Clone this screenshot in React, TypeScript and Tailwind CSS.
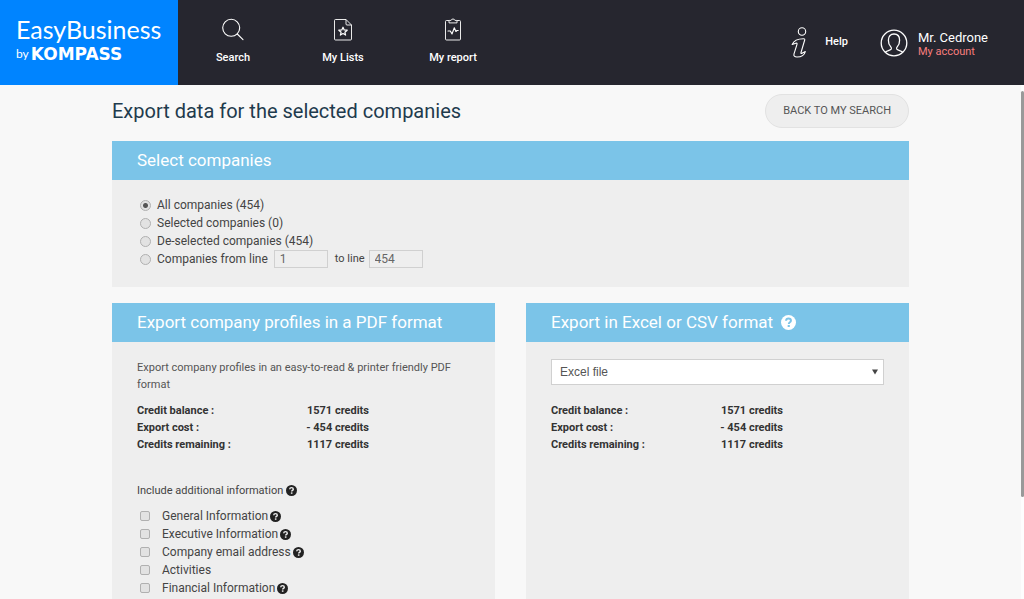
import { useState } from "react";
import type { ReactNode } from "react";

const SCOPES = [
  { value: "all", label: "All companies (454)" },
  { value: "selected", label: "Selected companies (0)" },
  { value: "deselected", label: "De-selected companies (454)" },
];

const CREDITS = [
  { label: "Credit balance :", amount: "1571 credits" },
  { label: "Export cost :", amount: "- 454 credits" },
  { label: "Credits remaining :", amount: "1117 credits" },
];

const EXTRAS = [
  { label: "General Information", help: true },
  { label: "Executive Information", help: true },
  { label: "Company email address", help: true },
  { label: "Activities", help: false },
  { label: "Financial Information", help: true },
];

const radioClass =
  "size-[11px] shrink-0 appearance-none rounded-full border border-[#b0b0b0] bg-[#e2e2e2] checked:bg-[radial-gradient(circle,#555_0_2px,#e2e2e2_3px)]";

function SearchIcon() {
  return (
    <svg width="24" height="24" viewBox="0 0 24 24" fill="none" stroke="currentColor" strokeWidth="1.1" strokeLinecap="round">
      <circle cx="10.2" cy="9.8" r="8.5" />
      <path d="M16.3 16 22 21.6" />
    </svg>
  );
}

function ListIcon() {
  return (
    <svg width="24" height="24" viewBox="0 0 24 24" fill="none" stroke="currentColor" strokeWidth="0.9" strokeLinejoin="round">
      <path d="M4.5 1.5H15L20.5 7v14q0 1-1 1h-15q-1 0-1-1V2.5q0-1 1-1" />
      <path d="M15 1.5V6q0 1 1 1h4.5" />
      <path strokeWidth="1.2" d="m12 9.2 1.2 2.7 3 .3-2.3 2 .7 2.9-2.6-1.5-2.6 1.5.7-2.9-2.3-2 3-.3z" />
    </svg>
  );
}

function ReportIcon() {
  return (
    <svg width="24" height="24" viewBox="0 0 24 24" fill="none" stroke="currentColor" strokeWidth="0.9" strokeLinejoin="round" strokeLinecap="round">
      <path d="M8 2.5H5.5q-1 0-1 1V21q0 1 1 1h13q1 0 1-1V3.5q0-1-1-1H16" />
      <path d="M8 4.5V3q0-.6.7-.6h1.4q.3-1.4 1.9-1.4t1.9 1.4h1.4q.7 0 .7.6v1.5z" />
      <path strokeWidth="1.1" d="M7 13h2.3l1.7 3 2.3-6.2 1.6 3.7 1-1h1.3" />
    </svg>
  );
}

function InfoIcon() {
  return (
    <svg width="18" height="32" viewBox="0 0 18 32" fill="none" stroke="currentColor" strokeWidth="1.1" strokeLinejoin="round">
      <circle cx="11" cy="4.5" r="3.7" />
      <path d="M1.2 17.5C2.8 13.5 6 11.7 12.6 11.7c1 0 1.3.5 1.1 1.3L10 25.500c-.3 1 .2 1.200 1 .8l3.300-1.700c-.8 3.200-4 5.400-8.300 5.400-2.400 0-3.600-1-3-3.200L6 17.300c.3-1-.2-1.400-1.200-1.100z" />
    </svg>
  );
}

function AccountIcon() {
  return (
    <svg width="28" height="28" viewBox="0 0 28 28" fill="none" stroke="currentColor" strokeWidth="1.3">
      <circle cx="14" cy="14" r="12.8" />
      <path d="M5.3 23.3c1-1.8 5.2-1.6 6-3.3.3-.8-.1-1.8-.8-2.6-1.5-1.6-2.1-3.9-2.1-6.2 0-3.8 2-6.2 5.6-6.2s5.6 2.4 5.6 6.2c0 2.3-.6 4.6-2.1 6.2-.7.8-1.1 1.8-.8 2.6.8 1.7 5 1.5 6 3.3" />
    </svg>
  );
}

function HelpDot({ light = false }: { light?: boolean }) {
  return (
    <button type="button" aria-label="More information" className={light ? "size-[15px] text-white" : "size-[11px] text-[#222]"}>
      <svg className="block size-full" viewBox="0 0 16 16">
        <circle cx="8" cy="8" r="8" fill="currentColor" />
        <path
          d="M5.4 6.2C5.5 4.6 6.5 3.8 8 3.8s2.6.8 2.6 2.2c0 1.8-2.3 1.8-2.3 3.6"
          fill="none"
          stroke={light ? "#7bc4e8" : "#eee"}
          strokeWidth="2.1"
        />
        <rect x="7.1" y="10.7" width="2.3" height="2.1" fill={light ? "#7bc4e8" : "#eee"} />
      </svg>
    </button>
  );
}

function NavItem({ icon, label }: { icon: ReactNode; label: string }) {
  return (
    <a href="#" className="flex w-[110px] flex-col items-center gap-2 pt-[18px] text-[11px] leading-4 font-medium">
      {icon}
      {label}
    </a>
  );
}

function Panel({ title, children }: { title: ReactNode; children: ReactNode }) {
  return (
    <section className="flex flex-col bg-[#eee]">
      <h2 className="flex h-[39px] shrink-0 items-center gap-2 bg-[#7bc4e8] px-[25px] text-[17px] text-white">{title}</h2>
      {children}
    </section>
  );
}

function Credits() {
  return (
    <table className="text-left text-[11px] leading-[17px] font-bold text-[#333]">
      <tbody>
        {CREDITS.map((row) => (
          <tr key={row.label}>
            <th scope="row" className="w-[160px] p-0">{row.label}</th>
            <td className="w-[72px] p-0 text-right">{row.amount}</td>
          </tr>
        ))}
      </tbody>
    </table>
  );
}

function Header() {
  return (
    <header className="flex h-[85px] shrink-0 bg-[#26262f] text-white">
      <a href="#" className="flex w-[178px] shrink-0 flex-col gap-0.5 bg-[#0084ff] pt-3.5 pl-4 font-[Lato,sans-serif]">
        <span className="text-[25px] leading-[30px]">EasyBusiness</span>
        <span className="flex items-center gap-0.5 text-[12px] leading-4">
          by
          <b className="font-['DejaVu_Sans',sans-serif] text-[17px]">KOMPASS</b>
        </span>
      </a>
      <nav className="flex">
        <NavItem icon={<SearchIcon />} label="Search" />
        <NavItem icon={<ListIcon />} label="My Lists" />
        <NavItem icon={<ReportIcon />} label="My report" />
      </nav>
      <div className="ml-auto flex items-center gap-8 pr-9">
        <a href="#" className="flex items-center gap-4 text-[11px] font-medium">
          <InfoIcon />
          Help
        </a>
        <a href="#" className="flex items-center gap-[10px]">
          <AccountIcon />
          <span className="flex flex-col pt-1">
            <span className="text-[13px] leading-[14px]">Mr. Cedrone</span>
            <span className="text-[11px] leading-[14px] text-[#f77e7e]">My account</span>
          </span>
        </a>
      </div>
    </header>
  );
}

export default function App() {
  const [scope, setScope] = useState("all");
  const [from, setFrom] = useState("1");
  const [to, setTo] = useState("454");

  return (
    <div className="flex h-screen flex-col overflow-hidden bg-[#f8f8f8] font-[Roboto,sans-serif] text-[#444]">
      <Header />
      <div className="flex min-h-0 flex-1">
        <main className="flex min-w-0 flex-1 flex-col overflow-hidden px-4">
          <div className="mx-auto flex w-full max-w-[797px] flex-1 flex-col">
            <div className="flex h-14 shrink-0 items-center justify-between pb-1">
              <h1 className="text-[20px] text-[#1f3b4d]">Export data for the selected companies</h1>
              <button
                type="button"
                className="h-[34px] rounded-full border border-[#e2e2e2] bg-[#eee] px-[17px] text-[11px] text-[#555]"
              >
                BACK TO MY SEARCH
              </button>
            </div>

            <Panel title="Select companies">
              <div className="px-7 pt-4 pb-[19px] text-[12px] leading-[18px]">
                {SCOPES.map((item) => (
                  <label key={item.value} className="flex items-center gap-1.5">
                    <input
                      type="radio"
                      name="scope"
                      className={radioClass}
                      checked={scope === item.value}
                      onChange={() => setScope(item.value)}
                    />
                    {item.label}
                  </label>
                ))}
                <div className="flex items-center">
                  <label className="flex items-center gap-1.5">
                    <input
                      type="radio"
                      name="scope"
                      className={radioClass}
                      checked={scope === "range"}
                      onChange={() => setScope("range")}
                    />
                    Companies from line
                  </label>
                  <input
                    aria-label="From line"
                    className="ml-1.5 h-[18px] w-[54px] border border-[#d0d0d0] px-[5px] text-[#666]"
                    value={from}
                    onChange={(e) => setFrom(e.target.value)}
                  />
                  <label className="ml-[7px] flex items-center gap-1 text-[11px]">
                    to line
                    <input
                      className="h-[18px] w-[54px] border border-[#d0d0d0] px-[5px] text-[12px] text-[#666]"
                      value={to}
                      onChange={(e) => setTo(e.target.value)}
                    />
                  </label>
                </div>
              </div>
            </Panel>

            <div className="mt-4 grid flex-1 grid-cols-2 gap-[31px]">
              <Panel title="Export company profiles in a PDF format">
                <div className="px-[25px] pt-[17px]">
                  <p className="mb-[9px] text-[11px] leading-[17px] text-[#555]">
                    Export company profiles in an easy-to-read & printer friendly PDF format
                  </p>
                  <Credits />
                  <fieldset className="pt-[29px]">
                    <legend className="contents">
                      <span className="flex items-center gap-[3px] text-[11px] leading-[17px]">
                        Include additional information <HelpDot />
                      </span>
                    </legend>
                    <div className="pt-2 pl-[3px] text-[12px] leading-[18px]">
                      {EXTRAS.map((item) => (
                        <div key={item.label} className="flex items-center gap-0.5">
                          <label className="flex items-center gap-3">
                            <input
                              type="checkbox"
                              className="size-[10px] shrink-0 appearance-none rounded-xs border border-[#b0b0b0] bg-[#e2e2e2] checked:bg-[#555]"
                            />
                            {item.label}
                          </label>
                          {item.help && <HelpDot />}
                        </div>
                      ))}
                    </div>
                  </fieldset>
                </div>
              </Panel>

              <Panel
                title={
                  <>
                    Export in Excel or CSV format <HelpDot light />
                  </>
                }
              >
                <div className="px-[25px] pt-[17px]">
                  <div className="relative mb-[17px]">
                    <select
                      aria-label="File format"
                      className="block h-[26px] w-full appearance-none border border-[#d0d0d0] bg-white px-2 font-['Liberation_Sans',sans-serif] text-[12px] text-[#555]"
                    >
                      <option>Excel file</option>
                      <option>CSV file</option>
                    </select>
                    <svg className="pointer-events-none absolute top-[10px] right-1.5" width="6" height="6" viewBox="0 0 6 6">
                      <path d="M0 .5h6L3 5.5z" fill="#444" />
                    </svg>
                  </div>
                  <Credits />
                </div>
              </Panel>
            </div>
          </div>
        </main>
        <div className="w-[3px] shrink-0 bg-[#fdfdfd] pt-1.5">
          <div className="h-4/5 rounded-xs bg-[#999]" />
        </div>
      </div>
    </div>
  );
}
